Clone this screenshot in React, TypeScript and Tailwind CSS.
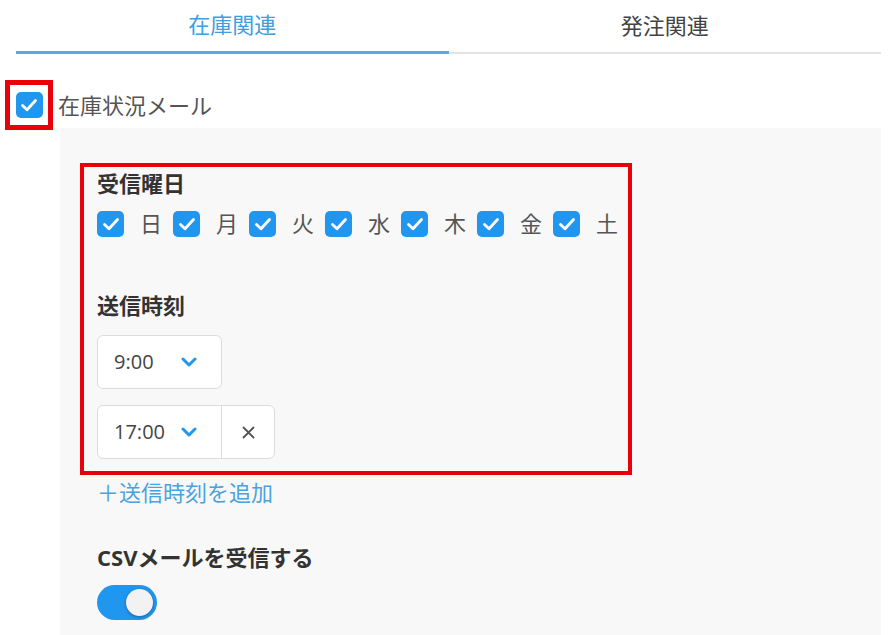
import React from "react";

const FONT = { fontFamily: '"Open Sans", "Noto Sans CJK JP", sans-serif' };

const Check = ({ size = 27 }: { size?: number }) => (
  <span
    className="inline-flex items-center justify-center rounded-[5px] bg-[#2196ef] shrink-0"
    style={{ width: size, height: size - 1 }}
  >
    <svg width="20" height="20" viewBox="0 0 20 20" fill="none">
      <path d="M3.5 10.5 L8 14.8 L16.5 5.5" stroke="white" strokeWidth="2.8" strokeLinecap="round" strokeLinejoin="round" />
    </svg>
  </span>
);

const Chevron = () => (
  <svg width="16" height="10" viewBox="0 0 16 10" fill="none">
    <path d="M2 2 L8 8 L14 2" stroke="#2196ef" strokeWidth="3" strokeLinecap="round" strokeLinejoin="round" />
  </svg>
);

const days = ["日", "月", "火", "水", "木", "金", "土"];

export default function App() {
  return (
    <div className="w-[896px] h-[635px] bg-white overflow-hidden" style={FONT}>
      {/* Tabs */}
      <div className="ml-[16px] w-[865px] flex">
        <div className="flex-1 h-[54px] flex items-center justify-center pb-[2px] border-b-[3px] border-[#5aaae6] text-[22px] text-[#3d9ee0]">
          在庫関連
        </div>
        <div className="flex-1 h-[54px] flex items-center justify-center pb-[2px] border-b-2 border-[#e3e3e3] text-[22px] text-[#444]">
          発注関連
        </div>
      </div>

      {/* Mail toggle */}
      <div className="flex items-center mt-[26px]">
        <div className="ml-[5px] w-[48px] h-[50px] border-[5px] border-[#e8000b] flex items-center justify-center">
          <Check />
        </div>
        <span className="ml-[5px] text-[22px] text-[#555]">在庫状況メール</span>
      </div>

      {/* Settings panel */}
      <div className="ml-[60px] w-[821px] h-[520px] -mt-[2px] bg-[#f8f8f8] pl-[20px] pt-[35px]">
        <div className="w-[552px] border-4 border-[#e8000b] pl-[13px] pt-[3px] pb-[12px]">
          <div className="text-[22px] leading-[26px] font-bold text-[#333]">受信曜日</div>
          <div className="flex items-center mt-[14px]">
            {days.map((d) => (
              <div key={d} className="flex items-center">
                <Check />
                <span className="ml-[16px] mr-[11px] w-[22px] text-[22px] leading-[27px] text-[#555] text-center">{d}</span>
              </div>
            ))}
          </div>

          <div className="mt-[55px] text-[22px] leading-[26px] font-bold text-[#333]">送信時刻</div>

          <div className="mt-[17px] w-[125px] h-[54px] rounded-[6px] border border-[#dcdcdc] bg-white flex items-center pl-[16px] pr-[24px] justify-between">
            <span className="text-[20px] text-[#444]">9:00</span>
            <Chevron />
          </div>

          <div className="mt-[16px] w-[178px] h-[54px] rounded-[6px] border border-[#dcdcdc] bg-white flex">
            <div className="w-[124px] flex items-center justify-between pl-[16px] pr-[24px] border-r border-[#dcdcdc]">
              <span className="text-[20px] text-[#444]">17:00</span>
              <Chevron />
            </div>
            <div className="flex-1 flex items-center justify-center">
              <svg width="13" height="13" viewBox="0 0 13 13" fill="none">
                <path d="M1.5 1.5 L11.5 11.5 M11.5 1.5 L1.5 11.5" stroke="#555" strokeWidth="1.8" strokeLinecap="round" />
              </svg>
            </div>
          </div>
        </div>

        <div className="pl-[17px]">
          <div className="mt-[4px] text-[22px] leading-[26px] text-[#4aa3df]">＋送信時刻を追加</div>
          <div className="mt-[39px] text-[22px] leading-[26px] font-bold text-[#333]">CSVメールを受信する</div>
          <div className="mt-[15px] w-[60px] h-[35px] rounded-full bg-[#2196ef] flex items-center justify-end pr-[4px]">
            <span className="w-[27px] h-[27px] rounded-full bg-[#f2f2f2] shadow-[0_1px_3px_rgba(0,0,0,0.35)]" />
          </div>
        </div>
      </div>
    </div>
  );
}
